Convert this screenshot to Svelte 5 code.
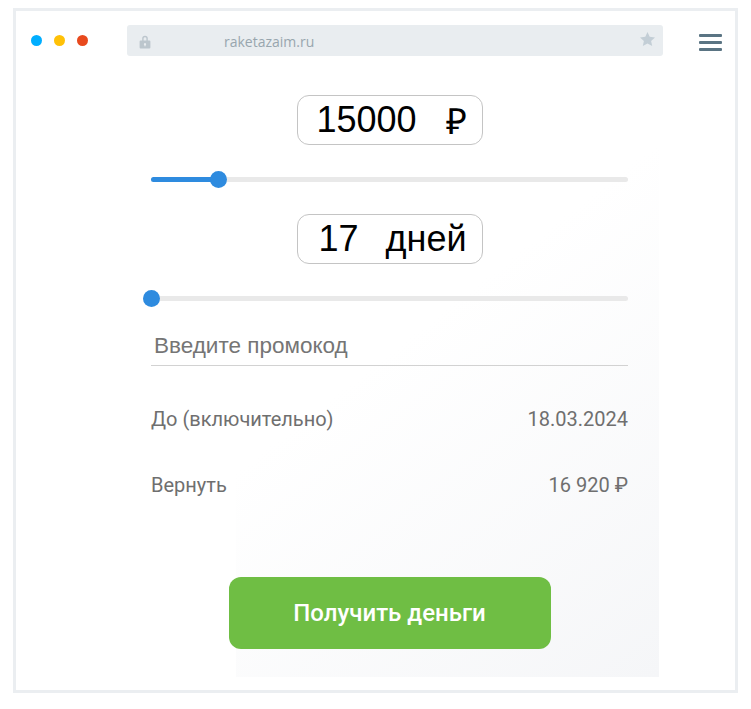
<script>
  const sliders = { amount: 14, days: 0 };
</script>

<div class="frame">
  <div class="glow"></div>
  <header class="toolbar">
    <div class="dots">
      <span class="dot blue"></span>
      <span class="dot yellow"></span>
      <span class="dot red"></span>
    </div>
    <div class="address">
      <svg class="lock" width="12" height="14" viewBox="0 0 12 14">
        <path fill="#bcc6cd" fill-rule="evenodd" d="M3.2 5.5V3.6a2.8 2.8 0 0 1 5.6 0v1.9h1.7c.5 0 .9.4.9.9v6.2c0 .5-.4.9-.9.9h-9c-.5 0-.9-.4-.9-.9V6.400c0-.5.4-.9.9-.9zm1.4 0h2.800V3.600a1.400 1.400 0 0 0-2.800 0zM6 8a1.200 1.200 0 0 0-.6 2.200v1h1.200v-1A1.200 1.200 0 0 0 6 8z"/>
      </svg>
      <span class="url">raketazaim.ru</span>
      <svg class="star" width="15" height="14" viewBox="0 0 15 14">
        <path fill="#c3ced6" d="M7.500 0l2.200 4.800 5.300.6-3.900 3.500 1.100 5.100-4.700-2.600-4.700 2.600 1.100-5.100L0 5.400l5.300-.6z"/>
      </svg>
    </div>
    <div class="menu"><i></i><i></i><i></i></div>
  </header>

  <main class="form">
    <div class="value amount"><span>15000</span><span class="unit">₽</span></div>
    <div class="slider first">
      <div class="fill" style="width: {sliders.amount}%"></div>
      <div class="thumb" style="left: {sliders.amount}%"></div>
    </div>
    <div class="value days"><span>17</span><span class="unit">дней</span></div>
    <div class="slider second">
      <div class="thumb" style="left: {sliders.days}%"></div>
    </div>
    <div class="promo">Введите промокод</div>
    <div class="row until"><span>До (включительно)</span><span>18.03.2024</span></div>
    <div class="row back"><span>Вернуть</span><span>16 920 ₽</span></div>
    <button class="cta">Получить деньги</button>
  </main>
</div>

<style>
  :global(body) {
    margin: 0;
    background: #fff;
  }
  .frame {
    position: relative;
    box-sizing: border-box;
    width: 725px;
    height: 685px;
    margin: 8px 0 0 13px;
    border: 3px solid #ebeef1;
    background: #fff;
    overflow: hidden;
  }
  .glow {
    position: absolute;
    left: 220px;
    top: 105px;
    width: 423px;
    height: 561px;
    background: linear-gradient(142deg, #fff 40%, #f5f6f8 100%);
  }
  .toolbar {
    position: relative;
    display: flex;
    align-items: flex-start;
    padding: 14px 0 0 15px;
    height: 31px;
  }
  .dots {
    display: flex;
    gap: 12px;
    padding-top: 10px;
  }
  .dot {
    width: 11px;
    height: 11px;
    border-radius: 50%;
  }
  .blue { background: #00aeff; }
  .yellow { background: #ffc107; }
  .red { background: #e8491d; }
  .address {
    display: flex;
    align-items: center;
    box-sizing: border-box;
    width: 536px;
    height: 31px;
    margin-left: 39px;
    padding: 0 8px 0 12px;
    background: #e9edf0;
    border-radius: 3px;
  }
  .lock { margin-top: 2px; }
  .url {
    margin-left: 73px;
    font: 14px "Open Sans", sans-serif;
    color: #98a6ae;
    flex: 1;
    margin-top: 1px;
  }
  .star { margin-top: -3px; }
  .menu {
    display: flex;
    flex-direction: column;
    gap: 4px;
    margin: 9px 0 0 36px;
  }
  .menu i {
    display: block;
    width: 23px;
    height: 3px;
    background: #5a7483;
    border-radius: 1px;
  }
  .form {
    position: relative;
    display: flex;
    flex-direction: column;
    align-items: center;
    width: 477px;
    margin-left: 135px;
    padding-top: 39px;
  }
  .value {
    box-sizing: border-box;
    display: flex;
    align-items: center;
    width: 186px;
    height: 50px;
    border: 1px solid #c4c4c4;
    border-radius: 12px;
    background: #fff;
    font: 36px "Liberation Sans", Arial, sans-serif;
    color: #000;
  }
  .amount { padding-left: 19px; }
  .amount .unit { margin-left: 29px; }
  .days { padding-left: 21px; }
  .days .unit { margin-left: 27px; }
  .slider {
    position: relative;
    width: 100%;
    height: 5px;
    background: #e9e9e9;
    border-radius: 3px;
  }
  .first { margin-top: 32px; }
  .second { margin-top: 32px; }
  .fill {
    position: absolute;
    left: 0;
    top: 0;
    height: 5px;
    background: #2e8bdf;
    border-radius: 3px;
  }
  .thumb {
    position: absolute;
    top: -6px;
    width: 17px;
    height: 17px;
    margin-left: -8px;
    border-radius: 50%;
    background: #2e8bdf;
  }
  .days { margin-top: 32px; }
  .promo {
    box-sizing: border-box;
    width: 100%;
    height: 39px;
    margin-top: 26px;
    padding: 3px 0 0 3px;
    border-bottom: 1px solid #d2d2d2;
    font: 22.500px "Liberation Sans", Arial, sans-serif;
    line-height: 32px;
    color: #757575;
  }
  .row {
    display: flex;
    justify-content: space-between;
    width: 100%;
    font: 20px Roboto, sans-serif;
    line-height: 24px;
    color: #6f6f6f;
  }
  .until { margin-top: 41px; }
  .back { margin-top: 42px; }
  .cta {
    width: 322px;
    height: 72px;
    margin-top: 80px;
    border: 0;
    border-radius: 12px;
    background: #6fbe44;
    color: #fff;
    font: 500 24px Roboto, sans-serif;
  }
</style>
